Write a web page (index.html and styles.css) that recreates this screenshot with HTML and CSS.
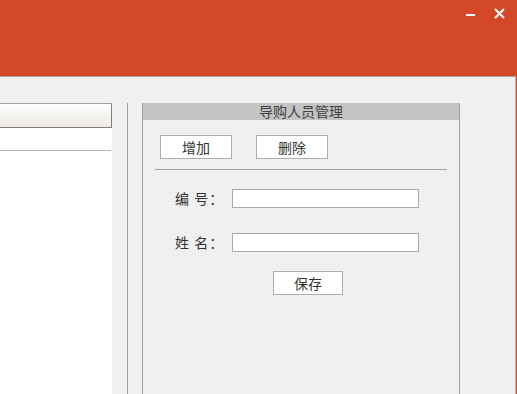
FILE: index.html
```html
<!DOCTYPE html>
<html lang="zh">
<head>
<meta charset="utf-8">
<title>导购人员管理</title>
<link rel="stylesheet" href="styles.css">
</head>
<body>
<div class="window">
  <header class="titlebar">
    <div class="controls">
      <svg class="btn-min" width="9" height="2" viewBox="0 0 9 2"><rect width="9" height="2" fill="#fff"/></svg>
      <svg class="btn-close" width="11" height="11" viewBox="0 0 11 11"><path d="M1 1 L10 10 M10 1 L1 10" stroke="#fff" stroke-width="2" fill="none"/></svg>
    </div>
  </header>
  <main class="content">
    <section class="grid">
      <div class="grid-head"></div>
      <div class="grid-body">
        <div class="grid-row"></div>
      </div>
    </section>
    <div class="splitter"></div>
    <section class="panel">
      <div class="panel-title">导购人员管理</div>
      <div class="toolbar">
        <button class="btn">增加</button>
        <button class="btn">删除</button>
      </div>
      <div class="divider"></div>
      <div class="form">
        <div class="form-row">
          <label class="label">编 号：</label>
          <input class="field" type="text">
        </div>
        <div class="form-row">
          <label class="label">姓 名：</label>
          <input class="field" type="text">
        </div>
        <button class="btn btn-save">保存</button>
      </div>
    </section>
  </main>
</div>
</body>
</html>
```

FILE: styles.css
```css
html, body {
  margin: 0;
  padding: 0;
}
body {
  width: 517px;
  height: 394px;
  overflow: hidden;
  background: #d34927;
  font-family: "Noto Sans CJK SC", "Noto Sans", sans-serif;
  color: #333;
}
.window {
  height: 394px;
  display: flex;
  flex-direction: column;
  padding-right: 1px;
  box-sizing: border-box;
}
.titlebar {
  height: 76px;
  flex: none;
  display: flex;
  justify-content: flex-end;
}
.controls {
  display: flex;
  align-items: flex-start;
  padding-right: 11px;
}
.btn-min {
  display: block;
  margin-top: 14px;
  margin-right: 19px;
}
.btn-close {
  display: block;
  margin-top: 8px;
}
.content {
  flex: 1;
  background: #f0f0f0;
  border-top: 1px solid #a0a0a0;
  border-right: 1px solid #bdbdbd;
  display: flex;
  align-items: stretch;
  padding-top: 26px;
  min-height: 0;
}
.grid {
  width: 111px;
  flex: none;
  display: flex;
  flex-direction: column;
  border-right: 1px solid #b4b4b4;
}
.grid-head {
  height: 23px;
  border-top: 1px solid #a0a0a0;
  border-bottom: 1px solid #808080;
  margin-right: -1px;
  border-right: 1px solid #808080;
  background: linear-gradient(#fdfdfd, #eeebe6);
}
.grid-body {
  flex: 1;
  background: #fff;
  border-right: 1px solid #fff;
  margin-right: -1px;
}
.grid-row {
  height: 22px;
  border-bottom: 1px solid #b4b4b4;
}
.splitter {
  width: 1px;
  flex: none;
  margin-left: 15px;
  background: #a0a0a0;
}
.panel {
  width: 316px;
  flex: none;
  margin-left: 14px;
  border: 1px solid #a0a0a0;
  border-top: none;
  border-bottom: none;
  display: flex;
  flex-direction: column;
}
.panel-title {
  height: 17px;
  line-height: 17px;
  background: #c4c4c4;
  text-align: center;
  font-size: 14px;
  color: #404040;
}
.toolbar {
  display: flex;
  gap: 24px;
  padding: 15px 0 0 17px;
}
.btn {
  width: 72px;
  height: 24px;
  padding: 0;
  margin: 0;
  background: #fff;
  border: 1px solid #adadad;
  font-family: inherit;
  font-size: 14px;
  line-height: 20px;
  color: #333;
}
.divider {
  height: 1px;
  background: #a0a0a0;
  margin: 10px 12px 0 12px;
}
.form {
  display: flex;
  flex-direction: column;
  padding-top: 19px;
}
.form-row {
  display: flex;
  align-items: center;
  height: 19px;
  margin-bottom: 25px;
}
.label {
  width: 89px;
  box-sizing: border-box;
  padding-left: 32px;
  letter-spacing: 1px;
  text-align: left;
  font-size: 14px;
  line-height: 19px;
  color: #333;
  white-space: pre;
}
.field {
  width: 187px;
  height: 19px;
  box-sizing: border-box;
  margin: 0;
  padding: 0 2px;
  border: 1px solid #a9a9a9;
  background: #fff;
  outline: none;
}
.btn-save {
  width: 70px;
  margin-top: -6px;
  margin-left: 130px;
}
```
